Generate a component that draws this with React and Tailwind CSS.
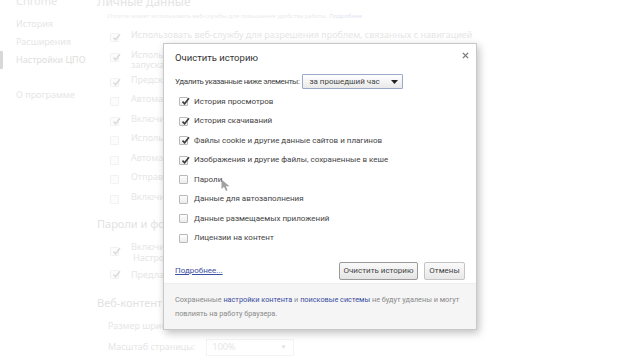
import React from 'react';

const font = { fontFamily: '"Noto Sans", "Open Sans", sans-serif' };
const dlgFont = { fontFamily: 'Roboto, "Noto Sans", sans-serif' };

// rows of the faded settings page; all but the first sit under the dialog
const bgRows = [
  { checked: true, lines: ['Использовать веб-службу для разрешения проблем, связанных с навигацией'] },
  { checked: true, lines: ['Использовать подсказки для завершения', 'запуска строку адресов'] },
  { checked: true, lines: ['Предсказывать сетевые действия'] },
  { checked: false, lines: ['Автоматически отправлять'] },
  { checked: true, lines: ['Включить защиту от фишинга'] },
  { checked: false, lines: ['Использовать веб-службу'] },
  { checked: false, lines: ['Автоматически отправлять'] },
  { checked: false, lines: ['Отправлять запрет'] },
  { checked: false, lines: ['Включить службу'] },
];

const items = [
  { label: 'История просмотров', checked: true },
  { label: 'История скачиваний', checked: true },
  { label: 'Файлы cookie и другие данные сайтов и плагинов', checked: true },
  { label: 'Изображения и другие файлы, сохраненные в кеше', checked: true },
  { label: 'Пароли', checked: false },
  { label: 'Данные для автозаполнения', checked: false },
  { label: 'Данные размещаемых приложений', checked: false },
  { label: 'Лицензии на контент', checked: false },
];

const Check = ({ faded }) => (
  <svg width="9" height="9" viewBox="0 0 9 9" className="absolute left-[1px] top-[-1px]">
    <path d="M1.5 4.6 L3.6 6.8 L8 1.2" fill="none" stroke={faded ? '#dcdcdc' : '#3a3a3a'} strokeWidth="1.6" />
  </svg>
);

const Box = ({ checked, faded }) => (
  <span
    className={`relative inline-block w-[9px] h-[9px] rounded-[1px] border ${
      faded ? 'border-[#f2f2f2] bg-[#fcfcfc]' : 'border-[#b9b9b9] bg-gradient-to-b from-[#fdfdfd] to-[#ececec]'
    }`}
  >
    {checked && <Check faded={faded} />}
  </span>
);

const Background = () => (
  <div className="flex w-full h-full bg-white text-[#e6e6e6] text-[9px]">
    <div className="w-[97px] shrink-0 relative">
      <div className="pl-[16px] -mt-[7px] text-[11px] text-[#e6e6e6]">Chrome</div>
      <div className="pl-[16px] mt-[5px] h-[18px] flex items-center">История</div>
      <div className="pl-[16px] h-[18px] flex items-center">Расширения</div>
      <div className="flex items-center h-[18px]">
        <span className="w-[3px] h-[18px] bg-[#d8d8d8] mr-[13px]" />
        <span className="text-[#dedede]">Настройки ЦПО</span>
      </div>
      <div className="pl-[16px] mt-[17px] h-[18px] flex items-center">О программе</div>
    </div>
    <div className="flex-1 relative">
      <div className="-mt-[7px] text-[12px] text-[#e4e4e4]">Личные данные</div>
      <div className="pl-[10px] mt-[1px] text-[6px] text-[#ececec] whitespace-nowrap">
        Chrome может использовать веб-службы для повышения удобства работы.{' '}
        <span className="text-[#e2e5f2]">Подробнее</span>
      </div>
      <div className="mt-[9px]">
        {bgRows.map((r, i) => (
          <div
            key={i}
            className={`flex items-start pl-[13px] whitespace-nowrap ${r.lines.length > 1 ? 'h-[25px]' : 'h-[19.5px]'} ${
              i > 0 ? 'w-[66px] overflow-hidden' : ''
            }`}
          >
            <span className="mt-[2px] mr-[12px]">
              <Box checked={r.checked} faded />
            </span>
            <div className="leading-[10px]">
              {r.lines.map((l, j) => (
                <div key={j}>{l}</div>
              ))}
            </div>
          </div>
        ))}
      </div>
      <div className="w-[66px] overflow-hidden">
        <div className="mt-[5px] text-[11px] text-[#e2e2e2] whitespace-nowrap">Пароли и формы</div>
        <div className="mt-[8px] whitespace-nowrap">
          <div className="flex items-start pl-[13px] h-[25px]">
            <span className="mt-[5px] mr-[12px]">
              <Box checked faded />
            </span>
            <div className="leading-[11px]">
              <div>Включить автозаполнение</div>
              <div className="pl-[2px]">Настроить</div>
            </div>
          </div>
          <div className="flex items-center pl-[13px] h-[18px]">
            <span className="mr-[12px] flex">
              <Box checked faded />
            </span>
            Предлагать сохранять
          </div>
        </div>
        <div className="mt-[11px] text-[11px] text-[#e2e2e2] whitespace-nowrap">Веб-контент</div>
        <div className="pl-[11px] mt-[7px] h-[16px] flex items-center whitespace-nowrap">Размер шрифта:</div>
      </div>
      <div className="pl-[11px] mt-[4px] h-[18px] flex items-center">
        Масштаб страницы:
        <span className="ml-[10px] w-[88px] h-[17px] border border-[#f4f4f4] flex items-center justify-between px-[6px]">
          <span>100%</span>
          <span className="text-[6px] text-[#e0e0e0]">▼</span>
        </span>
      </div>
    </div>
  </div>
);

const Dialog = () => (
  <div
    className="absolute left-[163px] top-[43px] w-[314px] h-[287px] bg-white border border-[#c8c8c8] shadow-[2px_3px_8px_rgba(0,0,0,0.25)] flex flex-col text-[#333]"
    style={dlgFont}
  >
    <button className="absolute right-[6px] top-[6px] w-[10px] h-[10px] flex items-center justify-center">
      <svg width="7" height="7" viewBox="0 0 8 8">
        <path d="M1 1 L7 7 M7 1 L1 7" stroke="#7a7a7a" strokeWidth="1.6" />
      </svg>
    </button>
    <div className="pl-[11px] pt-[7px] h-[26px] text-[9.5px] text-[#333] leading-[14px]">Очистить историю</div>
    <div className="pl-[11px] mt-[4px] flex items-center h-[15px] text-[8px] text-[#444]">
      <span className="tracking-[-0.4px]">Удалить указанные ниже элементы:</span>
      <span className="ml-[3px] w-[101px] h-[15px] border border-[#9aa9c9] rounded-[1px] bg-gradient-to-b from-[#ffffff] to-[#e9e9e9] flex items-center justify-between pl-[6px] pr-[4px]">
        <span>за прошедший час</span>
        <svg width="7" height="4" viewBox="0 0 7 4">
          <path d="M0 0 L7 0 L3.5 4 Z" fill="#222" />
        </svg>
      </span>
    </div>
    <div className="mt-[3px] pl-[15px]">
      {items.map((it) => (
        <div key={it.label} className="flex items-center h-[19.5px] text-[8px] text-[#444]">
          <span className="mr-[6px] flex">
            <Box checked={it.checked} />
          </span>
          {it.label}
        </div>
      ))}
    </div>
    <div className="flex items-center justify-between pl-[11px] pr-[11px] mt-[14px] h-[18px]">
      <span className="text-[8px] text-[#3b4ea0] underline">Подробнее...</span>
      <div className="flex gap-[6px]">
        <button className="h-[18px] w-[79px] border border-[#9a9a9a] rounded-[2px] bg-gradient-to-b from-[#fafafa] to-[#e4e4e4] text-[8px] text-[#444]">
          Очистить историю
        </button>
        <button className="h-[18px] w-[41px] border border-[#c4c4c4] rounded-[2px] bg-gradient-to-b from-[#fafafa] to-[#e8e8e8] text-[8px] text-[#444]">
          Отмены
        </button>
      </div>
    </div>
    <div className="mt-auto h-[46px] bg-[#f5f5f5] border-t border-[#eeeeee] pl-[11px] pr-[6px] pt-[9px] text-[7.3px] leading-[14px] text-[#8a8a8a] whitespace-nowrap">
      Сохраненные <span className="text-[#3b4ea0]">настройки контента</span> и{' '}
      <span className="text-[#3b4ea0]">поисковые системы</span> не будут удалены и могут
      <br />
      повлиять на работу браузера.
    </div>
  </div>
);

const Cursor = () => (
  <svg width="10" height="13" viewBox="0 0 10 13" className="absolute left-[221px] top-[179px]">
    <path d="M0.5 0.5 L0.5 10 L3 7.8 L5 12 L6.6 11.2 L4.8 7.2 L8.5 7.2 Z" fill="#8a8a8a" opacity="0.8" />
  </svg>
);

export default function App() {
  return (
    <div className="relative w-[640px] h-[360px] overflow-hidden bg-white" style={font}>
      <Background />
      <Dialog />
      <Cursor />
    </div>
  );
}
